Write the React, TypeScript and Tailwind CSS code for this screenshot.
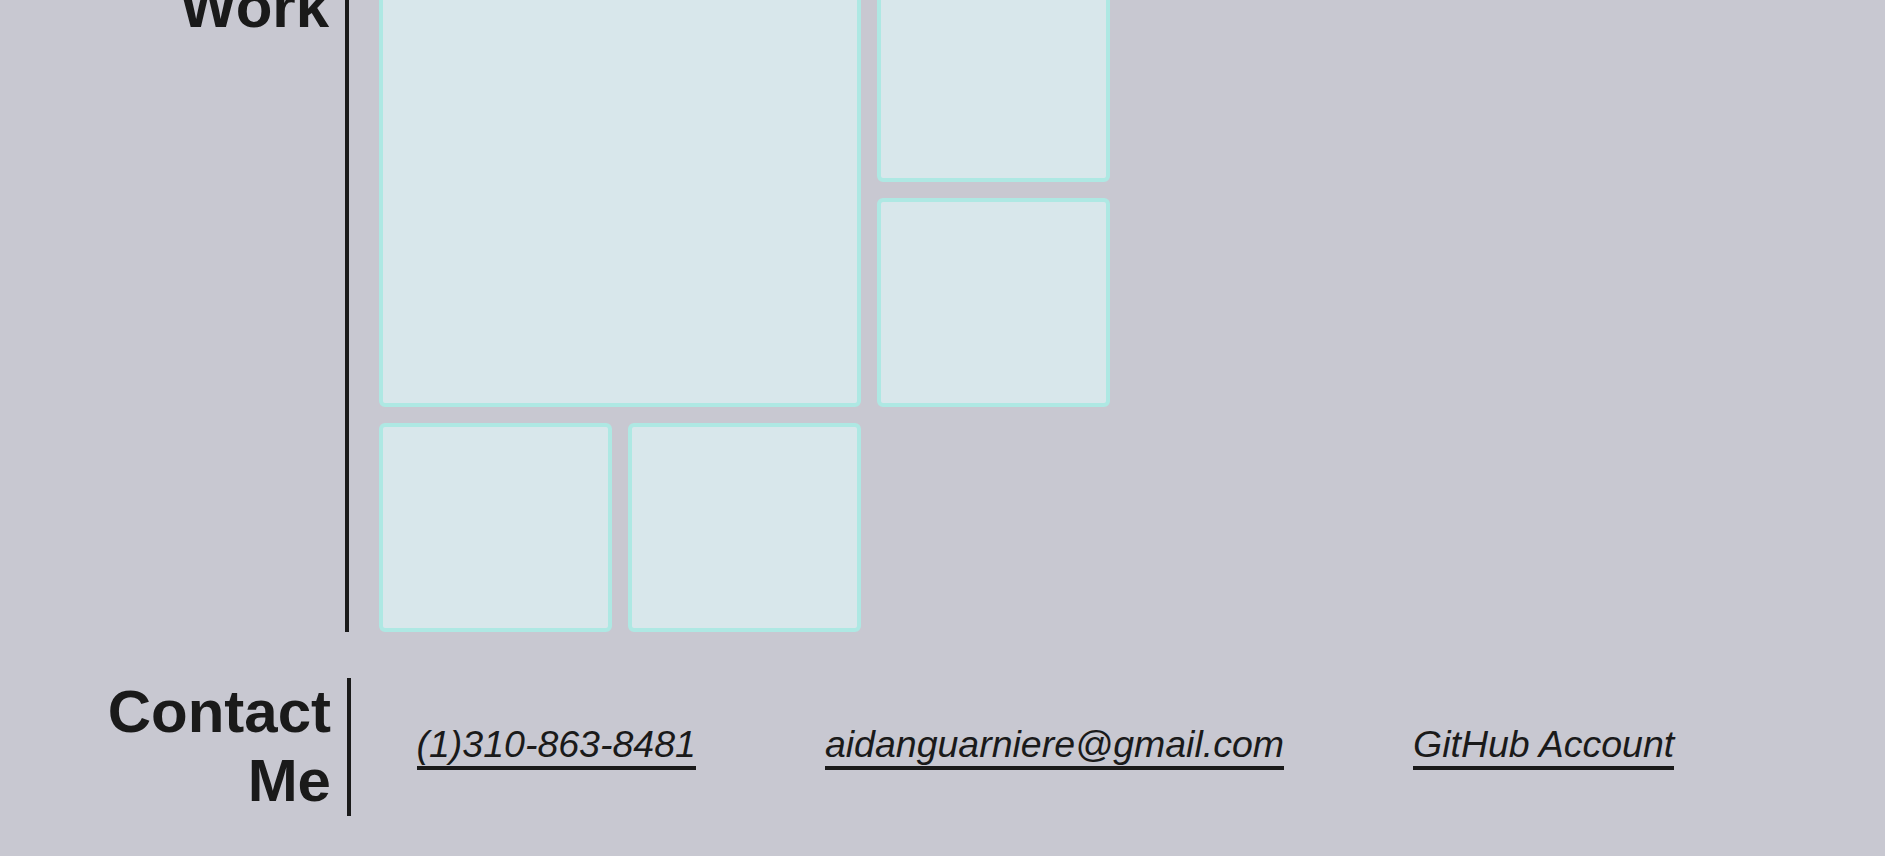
const tiles = [
  { id: "feature", span: "col-span-2 row-span-2" },
  { id: "side-a", span: "" },
  { id: "side-b", span: "" },
  { id: "bottom-a", span: "" },
  { id: "bottom-b", span: "" },
];

const links = [
  { label: "(1)310-863-8481", href: "tel:13108638481" },
  { label: "aidanguarniere@gmail.com", href: "mailto:aidanguarniere@gmail.com" },
  { label: "GitHub Account", href: "#" },
];

function SectionHeading({ children, width }: { children: React.ReactNode; width: string }) {
  return (
    <h2
      className={`${width} shrink-0 self-start border-r-4 border-[#1a1a1a] pr-4 text-right text-[60px] font-bold leading-[1.149] text-[#1a1a1a]`}
    >
      {children}
    </h2>
  );
}

export default function App() {
  return (
    <div className="h-[856px] overflow-hidden bg-[#c8c8d1] font-['Liberation_Sans',Arial,sans-serif]">
      {/* page is scrolled: the work section starts just above the fold */}
      <section className="-mt-[27px] flex items-stretch">
        <div className="flex w-[349px] shrink-0 border-r-4 border-[#1a1a1a] pr-4">
          <h2 className="w-full text-right text-[60px] font-bold leading-[1.149] text-[#1a1a1a]">Work</h2>
        </div>
        <div className="ml-[30px] grid grid-cols-[repeat(3,233px)] auto-rows-[209px] gap-4">
          {tiles.map((t) => (
            <div
              key={t.id}
              className={`${t.span} rounded-md border-4 border-[#aee8e3] bg-[#d8e7eb]`}
            />
          ))}
        </div>
      </section>

      <section className="mt-[46px] flex items-center">
        <SectionHeading width="w-[351px]">
          Contact
          <br />
          Me
        </SectionHeading>
        <div className="flex items-center pl-[1px]">
          {links.map((l) => (
            <a
              key={l.label}
              href={l.href}
              className="mx-[64.5px] border-b-4 border-[#1a1a1a] text-[37.5px] italic leading-[1.149] text-[#1a1a1a]"
            >
              {l.label}
            </a>
          ))}
        </div>
      </section>
    </div>
  );
}
